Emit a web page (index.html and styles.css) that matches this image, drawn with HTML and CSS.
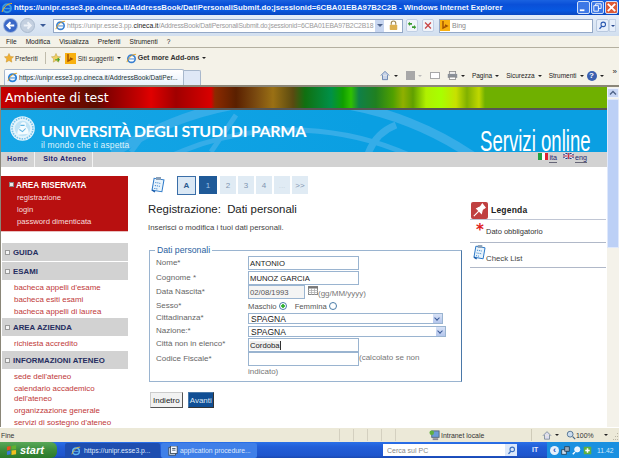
FILE: index.html
```html
<!DOCTYPE html>
<html lang="it">
<head>
<meta charset="utf-8">
<title>Registrazione: Dati personali</title>
<link rel="stylesheet" href="styles.css">
</head>
<body>
<div class="window">
  <header class="titlebar">
    <svg class="ie" viewBox="0 0 12 12"><circle cx="6" cy="6.300" r="4" fill="none" stroke="#3a9be0" stroke-width="2"/><path d="M3 6.500h6.500" stroke="#3a9be0" stroke-width="1.400"/><path d="M1 10C3 4 8 1 11 1.500" fill="none" stroke="#f0b020"/></svg>
    <span class="title-text">https://unipr.esse3.pp.cineca.it/AddressBook/DatiPersonaliSubmit.do;jsessionid=6CBA01EBA97B2C2B - Windows Internet Explorer</span>
    <span class="winbtns">
      <span class="winbtn"><svg viewBox="0 0 12 12"><path d="M2 9h5" stroke="#fff" stroke-width="2"/></svg></span>
      <span class="winbtn"><svg viewBox="0 0 12 12"><path d="M2 4h5v6H2zM4 4V2h6v5H7" fill="none" stroke="#fff"/></svg></span>
      <span class="winbtn close"><svg viewBox="0 0 12 12"><path d="M2 2l8 8M10 2l-8 8" stroke="#fff" stroke-width="2"/></svg></span>
    </span>
  </header>

  <div class="addressbar">
    <svg class="nav-arrow" viewBox="0 0 16 16"><circle cx="8" cy="8" r="7.500" fill="#3a68c8" stroke="#a8bcdc"/><path d="M12 8H5M8 4.500 4.500 8 8 11.500" fill="none" stroke="#fff" stroke-width="2"/></svg>
    <svg class="nav-arrow" viewBox="0 0 16 16"><circle cx="8" cy="8" r="7.500" fill="#c4d0e0" stroke="#a8b8cc"/><path d="M4 8h7M8 4.500 11.500 8 8 11.500" fill="none" stroke="#eef2f8" stroke-width="2"/></svg>
    <span class="nav-drop"></span>
    <div class="urlfield">
      <svg class="ie small" viewBox="0 0 12 12"><circle cx="6" cy="6.300" r="4" fill="none" stroke="#3a80d0" stroke-width="1.800"/><path d="M3 6.500h6" stroke="#3a80d0"/><path d="M1 10C3 4 8 1 11 1.500" fill="none" stroke="#e0a020"/></svg>
      <span class="url"><span class="dim">https://unipr.esse3.pp.</span>cineca.it<span class="dim tail">/AddressBook/DatiPersonaliSubmit.do;jsessionid=6CBA01EBA97B2C2B18</span></span>
      <span class="url-drop"><i></i></span>
      <svg class="lock" viewBox="0 0 12 14"><path d="M3 6V4a3 3 0 0 1 6 0v2" fill="none" stroke="#a08850" stroke-width="1.500"/><rect x="1" y="6" width="10" height="7" rx="1" fill="#dcb050"/></svg>
    </div>
    <span class="toolbtn"><svg viewBox="0 0 12 12"><path d="M1 4l2.500-2.500V3H6v2H3.500v1.500zM11 8 8.500 5.500V7H6v2h2.500v1.500z" fill="#3a9a30"/></svg></span>
    <span class="toolbtn stop"><svg viewBox="0 0 12 12"><path d="M2.500 2.500l7 7M9.500 2.500l-7 7" stroke="#c84848" stroke-width="1.600"/></svg></span>
    <div class="searchfield">
      <span class="bing"><svg viewBox="0 0 10 10"><path d="M3 1v7l4-2-2-1" fill="none" stroke="#a05000" stroke-width="1.400"/></svg></span>
      <span class="searchtext">Bing</span>
    </div>
    <span class="searchbtn"><svg viewBox="0 0 12 12"><circle cx="7" cy="4.500" r="3" fill="none" stroke="#2a58b0" stroke-width="1.400"/><path d="M5 7 2 10.500" stroke="#2a58b0" stroke-width="1.800"/></svg></span>
    <span class="searchdrop"><i></i></span>
  </div>

  <nav class="menubar">
    <span>File</span><span>Modifica</span><span>Visualizza</span><span>Preferiti</span><span>Strumenti</span><span>?</span>
  </nav>

  <div class="favbar">
    <svg class="star" viewBox="0 0 12 12"><path d="M6 .5l1.700 3.600 3.800.5-2.800 2.600.7 3.800L6 9.100l-3.400 1.900.7-3.800L.5 4.600l3.800-.5z" fill="#f0b030" stroke="#c08820" stroke-width=".5"/></svg>
    <span class="fav-label">Preferiti</span>
    <span class="fav-sep"></span>
    <svg class="star" viewBox="0 0 12 12"><path d="M6 .5l1.700 3.600 3.800.5-2.800 2.600.7 3.800L6 9.100l-3.400 1.900.7-3.800L.5 4.600l3.800-.5z" fill="#f0d060" stroke="#b09030" stroke-width=".5"/><path d="M5 8h5M8 6l2 2-2 2" fill="none" stroke="#40a030" stroke-width="1.300"/></svg>
    <span class="bing big"><svg viewBox="0 0 10 10"><path d="M3 1v7l4-2-2-1" fill="none" stroke="#a05000" stroke-width="1.400"/></svg></span>
    <span class="fav-item">Siti suggeriti</span><i class="caret"></i>
    <svg class="ie small addon" viewBox="0 0 12 12"><circle cx="6" cy="6.300" r="4" fill="#fff" stroke="#3a80d0" stroke-width="1.800"/><path d="M3 6.500h6" stroke="#3a80d0"/><path d="M1 10C3 4 8 1 11 1.500" fill="none" stroke="#e0a020"/></svg>
    <span class="fav-item strong">Get more Add-ons</span><i class="caret"></i>
  </div>

  <div class="tabbar">
    <div class="tab">
      <svg class="ie small" viewBox="0 0 12 12"><circle cx="6" cy="6.300" r="4" fill="none" stroke="#2a80d8" stroke-width="2"/><path d="M3 6.500h6" stroke="#2a80d8"/><path d="M1 10C3 4 8 1 11 1.500" fill="none" stroke="#e0a020"/></svg>
      <span>https://unipr.esse3.pp.cineca.it/AddressBook/DatiPer...</span>
    </div>
    <div class="newtab"></div>
    <div class="cmdbar">
      <svg class="cmd home" viewBox="0 0 12 12"><path d="M1 6l5-5 5 5M3 5.500V11h6V5.500" fill="#c8d4e8" stroke="#5a78a8"/></svg><i class="caret wide"></i>
      <span class="cmd-rss"></span><i class="caret light"></i>
      <span class="cmd-mail"></span>
      <svg class="cmd printer" viewBox="0 0 14 12"><rect x="3" y="1" width="8" height="4" fill="#eee" stroke="#888"/><rect x="1" y="4" width="12" height="5" fill="#8a9098"/><rect x="3" y="8" width="8" height="3" fill="#fff" stroke="#888"/></svg><i class="caret"></i>
      <span class="cmd-text">Pagina</span><i class="caret"></i>
      <span class="cmd-text">Sicurezza</span><i class="caret"></i>
      <span class="cmd-text">Strumenti</span><i class="caret"></i>
      <span class="help">?</span><i class="caret"></i>
      <span class="more">»</span>
    </div>
  </div>

  <div class="viewport">
    <div class="page">
      <div class="band">
        <span class="band-text">Ambiente di test</span>
      </div>
      <div class="brand">
        <svg class="watermark" viewBox="0 0 400 42"><g fill="none" stroke="#35ade8"><circle cx="180" cy="312" r="322" stroke-width="9"/><circle cx="180" cy="312" r="292" stroke-width="5"/><circle cx="180" cy="312" r="250" stroke-width="7"/><path d="M257 44C262 30 272 20 285 15" stroke-width="7"/><path d="M100 42 125 5M20 42 40 15" stroke-width="5"/></g></svg>
        <svg class="seal" viewBox="0 0 24 24"><circle cx="12" cy="12" r="11.800" fill="#e4f4fc"/><circle cx="12" cy="12" r="10" fill="none" stroke="#7cc4ea" stroke-width="1.600" stroke-dasharray="1.500 1"/><circle cx="12" cy="12" r="7.500" fill="#bfe3f6"/><path d="M7 18c0-4 1-6 3-7-1-3 1-5 3-5s3 2 2 4c2 1 3 4 3 7z" fill="#f4fbfe"/><path d="M9 13l3 2 3-3M10 9h4" stroke="#5fb4e2" fill="none"/></svg>
        <div class="brand-copy">
          <div class="brand-name">UNIVERSITÀ DEGLI STUDI DI PARMA</div>
          <div class="brand-tag">il mondo che ti aspetta</div>
        </div>
        <div class="brand-services">Servizi online</div>
      </div>
      <div class="topnav">
        <a class="topnav-item">Home</a>
        <a class="topnav-item">Sito Ateneo</a>
        <div class="langs">
          <span class="flag-it"><i></i><i></i><i></i></span><a>ita</a>
          <svg class="flag-uk" viewBox="0 0 12 7"><rect width="12" height="7" fill="#2a3a80"/><path d="M0 0l12 7M12 0 0 7" stroke="#fff" stroke-width="1.200"/><path d="M6 0v7M0 3.500h12" stroke="#fff" stroke-width="2"/><path d="M6 0v7M0 3.500h12" stroke="#c02030"/></svg><a>eng</a>
        </div>
      </div>

      <div class="content">
        <aside class="sidebar">
          <section class="reserved">
            <h3><i class="bullet"></i>AREA RISERVATA</h3>
            <a>registrazione</a>
            <a>login</a>
            <a>password dimenticata</a>
          </section>
          <section class="menu">
            <h4><i class="plus"></i>GUIDA</h4>
            <h4><i class="plus"></i>ESAMI</h4>
            <div class="links">
              <a>bacheca appelli d'esame</a>
              <a>bacheca esiti esami</a>
              <a>bacheca appelli di laurea</a>
            </div>
            <h4><i class="plus"></i>AREA AZIENDA</h4>
            <div class="links single">
              <a>richiesta accredito</a>
            </div>
            <h4><i class="plus"></i>INFORMAZIONI ATENEO</h4>
            <div class="links">
              <a>sede dell'ateneo</a>
              <a>calendario accademico dell'ateneo</a>
              <a>organizzazione generale</a>
              <a>servizi di sostegno d'ateneo</a>
            </div>
          </section>
        </aside>

        <main class="main">
          <div class="steps">
            <svg class="checklist" viewBox="0 0 14 16"><g transform="rotate(10 7 8)"><rect x="2" y="2" width="10" height="12" fill="#e8f3fb" stroke="#2a78c8"/><path d="M4 6h6M4 9h6M4 12h4" stroke="#2a78c8" stroke-dasharray="1 1"/></g><rect x="5" y="0" width="5" height="3" fill="#8aa0b8"/><path d="M1 13l3 2" stroke="#1a5aa8" stroke-width="1.500"/></svg>
            <span class="step current">A</span>
            <span class="step active">1</span>
            <span class="step">2</span>
            <span class="step">3</span>
            <span class="step">4</span>
            <span class="step faint">...</span>
            <span class="step">&gt;&gt;</span>
          </div>
          <h1>Registrazione:&nbsp; Dati personali</h1>
          <p class="intro">Inserisci o modifica i tuoi dati personali.</p>
          <fieldset class="form">
            <legend>Dati personali</legend>
            <div class="row first"><label>Nome*</label><div class="val"><span class="input">ANTONIO</span></div></div>
            <div class="row"><label>Cognome *</label><div class="val"><span class="input">MUNOZ GARCIA</span></div></div>
            <div class="row"><label>Data Nascita*</label><div class="val"><span class="input date">02/08/1993</span>
              <svg class="cal" viewBox="0 0 10 9"><rect x=".5" y=".5" width="9" height="8" fill="#fff" stroke="#888"/><path d="M0 1.500h10" stroke="#777" stroke-width="2"/><path d="M3.500 2v7M6.500 2v7M0 4.500h10M0 6.500h10" stroke="#aaa" stroke-width=".7"/></svg><span class="hint fmt">(gg/MM/yyyy)</span></div></div>
            <div class="row sex"><label>Sesso*</label><div class="val"><span class="opt">Maschio</span><i class="radio on"></i><span class="opt f">Femmina</span><i class="radio"></i></div></div>
            <div class="row sel"><label>Cittadinanza*</label><div class="val"><span class="select w1">SPAGNA<b></b></span></div></div>
            <div class="row sel nat"><label>Nazione:*</label><div class="val"><span class="select w2">SPAGNA<b></b></span></div></div>
            <div class="row city"><label>Città non in elenco*</label><div class="val"><span class="input"><span class="typed">Cordoba</span></span></div></div>
            <div class="row last"><label>Codice Fiscale*</label><div class="val"><span class="input"></span><span class="hint">(calcolato se non indicato)</span></div></div>
          </fieldset>
          <div class="actions">
            <span class="btn">Indietro</span>
            <span class="btn primary">Avanti</span>
          </div>
        </main>

        <aside class="legend">
          <div class="legend-head">
            <span class="pin"><svg viewBox="0 0 18 18"><path d="M3 15l5-5M6 7l5 5 1-4 3-2-3-4-2 3z" fill="#fff" stroke="#fff" stroke-width="1.200"/></svg></span>
            <strong>Legenda</strong>
          </div>
          <div class="legend-row req"><span class="asterisk">*</span><span>Dato obbligatorio</span></div>
          <div class="legend-row chk">
            <svg class="checklist" viewBox="0 0 14 16"><g transform="rotate(10 7 8)"><rect x="2" y="2" width="10" height="12" fill="#e8f3fb" stroke="#2a78c8"/><path d="M4 6h6M4 9h6M4 12h4" stroke="#2a78c8" stroke-dasharray="1 1"/></g><rect x="5" y="0" width="5" height="3" fill="#8aa0b8"/><path d="M1 13l3 2" stroke="#1a5aa8" stroke-width="1.500"/></svg>
            <span>Check List</span>
          </div>
        </aside>
      </div>
    </div>
    <div class="scrollbar">
      <span class="sb-btn"><svg viewBox="0 0 8 6"><path d="M1 4.500l3-3 3 3" fill="none" stroke="#4d6185" stroke-width="1.300"/></svg></span>
      <span class="sb-thumb"></span>
    </div>
  </div>

  <div class="statusbar">
    <span class="status-text">Fine</span>
    <span class="panes"><i></i><i></i><i></i><i></i><i></i></span>
    <svg class="zone" viewBox="0 0 12 12"><rect x="3" y="1" width="8" height="7" fill="#6a9ad8" stroke="#567"/><circle cx="3" cy="3" r="2.500" fill="#60b040"/><rect x="4" y="9" width="6" height="2" fill="#889"/></svg>
    <span class="zone-text">Intranet locale</span>
    <span class="status-sep"></span>
    <svg class="status-ico home" viewBox="0 0 12 12"><path d="M1 7l5-5 5 5M3 6v5h6V6" fill="#dde" stroke="#789"/></svg><i class="caret"></i>
    <svg class="status-ico mag" viewBox="0 0 12 12"><circle cx="5" cy="5" r="3.500" fill="#cde" stroke="#468"/><path d="M8 8l3 3" stroke="#468" stroke-width="1.500"/></svg>
    <span class="zoom-text">100%</span><i class="caret zoom-caret"></i>
    <svg class="grip" viewBox="0 0 6 9"><path d="M4.500 1v1M2.500 4v1M4.500 4v1M.5 7v1M2.500 7v1M4.500 7v1" stroke="#b8b4a4"/></svg>
  </div>

  <footer class="taskbar">
    <div class="start">
      <svg viewBox="0 0 12 12"><path d="M1 2l4-1v4l-4 1z" fill="#e85020"/><path d="M6 1l5-1v4.500L6 5z" fill="#60b030"/><path d="M1 7l4-1v4l-4 1z" fill="#3878d8"/><path d="M6 6l5-.5V10l-5 1z" fill="#f0c020"/></svg>
      <span>start</span>
    </div>
    <div class="task dark">
      <svg viewBox="0 0 12 12"><circle cx="6" cy="6.300" r="4" fill="none" stroke="#60b8f0" stroke-width="1.800"/><path d="M3 6.500h6" stroke="#60b8f0"/><path d="M1 10C3 4 8 1 11 1.500" fill="none" stroke="#f0c030"/></svg>
      <span>https://unipr.esse3.p...</span>
    </div>
    <div class="task">
      <svg viewBox="0 0 12 12"><rect x="1" y="2" width="8" height="9" fill="#dde6f4" stroke="#345"/><rect x="3" y="0" width="8" height="9" fill="#f4f8ff" stroke="#345"/><path d="M5 3h4M5 5h4" stroke="#345"/></svg>
      <span>application procedure...</span>
    </div>
    <div class="deskbar">
      <span class="deskbar-text">Cerca sul PC</span>
      <span class="deskbar-btn"><svg viewBox="0 0 12 12"><circle cx="7" cy="4.500" r="3" fill="none" stroke="#3a70c0" stroke-width="1.400"/><path d="M5 7 2 10.500" stroke="#3a70c0" stroke-width="1.800"/></svg></span>
    </div>
    <span class="lang">IT</span>
    <div class="tray">
      <span class="tray-chev">‹</span>
      <svg class="tray-ico" viewBox="0 0 12 12"><rect x="1" y="5" width="6" height="6" fill="#cde" stroke="#234"/><rect x="5" y="1" width="6" height="6" fill="#9ab" stroke="#234"/></svg>
      <svg class="tray-ico" viewBox="0 0 12 12"><circle cx="7" cy="4.500" r="3.500" fill="#e8f4ff" stroke="#fff"/><path d="M4 8l-3 3" stroke="#fff" stroke-width="2"/></svg>
      <svg class="tray-ico" viewBox="0 0 12 12"><rect x="1" y="1" width="10" height="10" fill="#60b040"/><path d="M6 3v6M3 6h6" stroke="#fff" stroke-width="2"/></svg>
      <span class="clock">11.42</span>
    </div>
  </footer>
</div>
</body>
</html>
```

FILE: styles.css
```css
* { box-sizing: border-box; }
html, body { margin: 0; padding: 0; }
body { width: 619px; height: 458px; overflow: hidden; font-family: "Liberation Sans", Arial, sans-serif; background: #ece9d8; }
svg { display: block; flex: none; }
i { display: block; font-style: normal; }
a { text-decoration: none; color: inherit; }

.window { width: 619px; height: 458px; display: flex; flex-direction: column; }

/* title bar */
.titlebar { height: 15px; flex: none; display: flex; align-items: center; padding-left: 1px; background: linear-gradient(#1a62e0, #0a50d8 30%, #0858e0 70%, #0a48c0); color: #fff; }
.titlebar .ie { width: 12px; height: 12px; }
.title-text { margin-left: 1px; font: bold 7.800px/14px "Liberation Sans", sans-serif; white-space: nowrap; flex: 1; overflow: hidden; opacity: .95; }
.winbtns { display: flex; gap: 1px; margin-right: 1px; }
.winbtn { width: 13px; height: 13px; border: 1px solid #cfe0fa; border-radius: 2px; background: #3d78e6; display: flex; align-items: center; justify-content: center; }
.winbtn svg { width: 11px; height: 11px; }
.winbtn.close { background: #dc5a38; }

/* address row */
.addressbar { height: 21px; flex: none; display: flex; align-items: center; padding-left: 3px; background: linear-gradient(#e4edf8, #d2dfef); }
.nav-arrow { width: 15px; height: 15px; margin-right: 2px; }
.nav-drop { width: 0; height: 0; margin: 0 7px 0 3px; border: 3px solid transparent; border-top: 3px solid #3a5a98; border-bottom: 0; }
.urlfield { width: 350px; height: 14px; display: flex; align-items: center; background: #fff; border: 1px solid #94a8c6; }
.ie.small { width: 11px; height: 11px; }
.urlfield .ie { margin-left: 1px; }
.url { margin-left: 1px; flex: 1; width: 0; overflow: hidden; white-space: nowrap; font-size: 6.800px; line-height: 11px; color: #222; }
.url .dim { color: #9a9a9a; }
.url .tail { letter-spacing: -.18px; }
.url-drop { width: 9px; height: 12px; background: #c8d6f0; display: flex; align-items: center; justify-content: center; }
.url-drop i { border: 3px solid transparent; border-top-color: #50648c; border-bottom: 0; }
.lock { width: 9px; height: 11px; margin: 0 4px 0 5px; }
.toolbtn { width: 12px; height: 13px; margin-left: 3px; background: #f0f4fa; border: 1px solid #c0cfe4; border-radius: 2px; }
.toolbtn.stop { margin-left: 4px; }
.toolbtn svg { width: 10px; height: 11px; }
.searchfield { width: 154px; height: 14px; margin-left: 5px; display: flex; align-items: center; background: #fff; border: 1px solid #94a8c6; }
.bing { width: 10px; height: 11px; background: #f8b010; }
.bing svg { width: 10px; height: 10px; }
.bing.big { width: 11px; height: 11px; margin: 0 2px 0 4px; }
.searchtext { margin-left: 2px; font-size: 7px; color: #8a8a8a; }
.searchbtn { width: 13px; height: 13px; margin-left: 3px; background: #e6eefa; border: 1px solid #b8c8de; border-radius: 2px; display: flex; align-items: center; justify-content: center; }
.searchbtn svg { width: 9px; height: 9px; }
.searchdrop { width: 7px; height: 13px; background: #e6eefa; border: 1px solid #c4d2e6; display: flex; align-items: center; justify-content: center; }
.searchdrop i { border: 2px solid transparent; border-top-color: #2a4a90; border-bottom: 0; }

/* menu */
.menubar { height: 12px; flex: none; display: flex; align-items: center; padding-left: 6px; gap: 9px; font-size: 6.600px; color: #222; background: #f4f2e8; border-bottom: 1px solid #b4b0a0; }

/* favorites */
.favbar { height: 18px; flex: none; display: flex; align-items: center; padding: 2px 0 0 4px; background: #f4f2e8; font-size: 6.600px; color: #333; }
.star { width: 10px; height: 10px; }
.fav-label { margin-left: 1px; }
.fav-sep { width: 1px; height: 12px; margin: 0 5px 0 7px; background: #c0bcac; }
.fav-item.strong { font-weight: bold; font-size: 7.100px; }
.caret { width: 0; height: 0; margin: 0 3px; border: 2px solid transparent; border-top: 2px solid #222; border-bottom: 0; flex: none; }
.caret.light { border-top-color: #bbb; }
.caret.wide { margin: 0 4px; }
.addon { margin: 0 1px 0 2px; }

/* tabs */
.tabbar { height: 19px; flex: none; display: flex; align-items: flex-end; padding-left: 4px; background: #f4f2e8; }
.tab { width: 180px; height: 16px; display: flex; align-items: center; padding-left: 2px; gap: 1px; font-size: 6.600px; color: #233; white-space: nowrap; overflow: hidden; background: linear-gradient(#fff, #e8f0fa); border: 1px solid #a8b8cc; border-bottom: 0; border-radius: 2px 2px 0 0; }
.newtab { width: 17px; height: 15px; background: #dfe8f6; border: 1px solid #a8b8cc; border-left: 0; border-bottom: 0; border-radius: 0 2px 0 0; }
.cmdbar { flex: 1; height: 19px; padding-right: 2px; display: flex; align-items: center; justify-content: flex-end; font-size: 6.500px; color: #222; }
.cmd { height: 11px; width: 10px; }
.cmd.printer { width: 11px; margin-left: 7px; }
.cmd-rss { width: 9px; height: 9px; margin-left: 4px; background: #a8a8a8; }
.cmd-mail { width: 10px; height: 7px; margin-left: 5px; border: 1px solid #a8a8a8; background: #fff; }
.cmd-text { margin-left: 4px; }
.help { width: 10px; height: 10px; margin-left: 0; border-radius: 50%; background: #3a60b0; color: #fff; text-align: center; font: bold 8px/10px "Liberation Sans", sans-serif; }
.more { font-size: 8px; margin: -8px 0 0 6px; }

/* viewport */
.viewport { height: 342px; flex: none; display: flex; background: #fff; border-left: 1px solid #8a8678; border-top: 2px solid #8a8678; }
.page { width: 606px; flex: none; display: flex; flex-direction: column; overflow: hidden; }
.scrollbar { flex: 1; display: flex; flex-direction: column; background: #f4f2ea; }
.sb-btn { height: 10px; margin-top: 1px; background: #c8d6f4; border: 1px solid #eef2fb; display: flex; align-items: center; justify-content: center; }
.sb-btn svg { width: 8px; height: 6px; }
.sb-thumb { height: 149px; margin-top: 1px; background: #bcd0f6; border: 1px solid #dfe8fb; border-radius: 1px; }

.band { height: 21px; flex: none; padding-left: 4px; color: #fff; font: 12.500px/21px "DejaVu Sans", sans-serif; background: linear-gradient(90deg, #c80000 0, #b00000 20px, #5a0c00 95px, #800000 105px, #c80000 140px, #e00000 150px, #a00000 175px, #c00000 195px, #d80000 210px, #8c2a00 214px, #5a2000 235px, #7a4a10 255px, #9a7014 272px, #5a4a10 292px, #107010 304px, #009048 330px, #10a000 342px, #30c000 350px, #108048 358px, #208020 375px, #50a000 392px, #90b000 402px, #60a000 412px, #b0f000 425px, #a8ff00 440px, #c8e000 455px, #80b000 466px, #c0d800 478px, #6fb000 484px, #6fb000 100%); }
.brand { height: 44px; flex: none; display: flex; align-items: flex-start; position: relative; overflow: hidden; background: linear-gradient(90deg, #16a6e6, #0a9fe2 60%); border-top: 2px solid #555; }
.watermark { position: absolute; left: 110px; top: 0; width: 400px; height: 42px; }
.seal { position: relative; width: 25px; height: 25px; margin: 6px 0 0 9px; }
.brand-copy { position: relative; margin-left: 6px; padding-top: 12px; color: #fff; }
.brand-name { font: 700 16px/17px Lato, sans-serif; letter-spacing: -.3px; white-space: nowrap; }
.brand-tag { margin-top: 1px; font-size: 8.500px; line-height: 10px; color: #dff3fc; letter-spacing: .15px; }
.brand-services { position: relative; width: 112px; margin: 20px 15px 0 auto; transform: scaleY(1.610); transform-origin: left top; color: #fff; font: 18.600px/14px "Liberation Sans", sans-serif; white-space: nowrap; }

.topnav { height: 15px; flex: none; display: flex; align-items: stretch; background: #d2d2d2; color: #25256e; font-size: 7.200px; font-weight: bold; }
.topnav-item { padding: 0 6px; line-height: 13px; border-right: 1px solid #f2f2f2; letter-spacing: .3px; }
.topnav-item + .topnav-item { padding: 0 6px 0 8px; }
.langs { margin-left: auto; padding: 1px 20px 0 0; display: flex; align-items: flex-start; font-weight: normal; line-height: 9px; }
.flag-it { width: 10px; height: 7px; display: flex; margin-right: 1px; }
.flag-it i { flex: 1; background: #fff; }
.flag-it i:first-child { background: #20a040; }
.flag-it i:last-child { background: #e02030; }
.langs a { border-bottom: 1px solid #667; }
.flag-uk { width: 11px; height: 6px; margin: 0 1px 0 6px; }

.content { flex: 1; min-height: 0; display: flex; }

/* sidebar */
.sidebar { width: 127px; flex: none; padding-top: 9px; overflow: hidden; }
.reserved { height: 56px; padding: 4px 0 0 5px; background: #b81010; border-bottom: 1px solid #e8c0c0; color: #f6dede; font-size: 7.700px; line-height: 12px; }
.reserved h3 { margin: 0 0 1px; display: flex; align-items: center; color: #fff; font-size: 8.200px; line-height: 11px; }
.bullet { width: 5px; height: 5px; margin: -3px 2px 0 3px; background: #f0e8e8; border: 1px solid #888; }
.reserved a { display: block; padding-left: 11px; }
.menu { margin-top: 11px; margin-left: 1px; }
.menu h4 { margin: 0 0 1px; height: 18px; display: flex; align-items: center; background: #d2d2d2; color: #252d60; font-size: 7.800px; letter-spacing: .05px; }
.plus { width: 5px; height: 5px; margin: 0 3px; background: #f4f4f4; border: 1px solid #999; }
.links { padding: 1px 0 0 12px; color: #c03838; font-size: 7.900px; line-height: 10px; }
.links.single { padding-bottom: 1px; }
.links a { display: block; padding: 1px 10px 1px 0; }

/* main */
.main { width: 314px; flex: none; margin-left: 21px; padding-top: 8px; }
.steps { height: 20px; display: flex; align-items: center; gap: 2px; padding-left: 2px; }
.steps .checklist { margin-right: 10px; }
.checklist { width: 14px; height: 16px; }
.step { width: 16px; height: 18px; display: flex; align-items: center; justify-content: center; background: #e0ebf4; color: #7f94b0; font-size: 8px; }
.step.current { width: 19px; height: 19px; color: #2a5a90; border: 1px solid #3a6ea8; font-weight: bold; background: #dbe8f4; }
.step.active { width: 18px; height: 18px; margin: 0 1px; background: #1f5a98; color: #9ec4e6; }
.step.faint { color: #c8d4e0; }
h1 { margin: 7px 0 0 -1px; font-size: 11.400px; line-height: 14px; font-weight: normal; color: #222; white-space: nowrap; }
.intro { margin: 7px 0 0 -1px; font-size: 7.800px; line-height: 10px; color: #444; }

.form { width: 313px; height: 136px; margin: 13px 0 0; padding: 1px 3px 0 6px; border: 1px solid #9ab4d0; border-right-color: #4a78a8; }
.form legend { margin-left: -1px; padding: 0 2px; font-size: 8.700px; line-height: 9px; color: #2a5fa0; }
.row { display: grid; grid-template-columns: 92px 1fr; height: 14px; font-size: 8px; color: #666; }
.row.first { height: 15px; }
.row label { line-height: 11px; margin-top: 1px; }
.row.sex label { margin-top: -1px; }
.row.sel label { margin-top: -1px; }
.row.city label { margin-top: 0; }
.val { display: flex; align-items: flex-start; }
.input { width: 111px; height: 14px; padding-left: 1px; border: 1px solid #9ab4d0; background: #fff; color: #222; font-size: 7.700px; line-height: 13px; }
.input.date { width: 57px; color: #555; background: #f4f4f4; }
.typed { background: #f0f0f0; border-right: 1px solid #333; }
.cal { width: 10px; height: 9px; margin-left: 3px; margin-top: 1px; }
.hint { font-size: 8px; line-height: 12px; color: #777; }
.fmt { margin-top: 3px; }
.row.sex { padding-top: 2px; }
.opt { line-height: 11px; color: #555; font-size: 7.700px; }
.opt.f { margin-left: 8px; }
.radio { width: 8px; height: 8px; margin: 1px 0 0 2px; border: 1px solid #4a7ca8; border-radius: 50%; background: #fff; }
.radio.on { background: radial-gradient(circle, #30b030 0 1.500px, #fff 2px); }
.row.sel { height: 13px; }
.row.sel.nat { height: 12px; }
.select { width: 195px; height: 11px; padding-left: 2px; display: flex; align-items: center; justify-content: space-between; border: 1px solid #9ab4d0; color: #222; font-size: 8.500px; background: #fff; }
.select.w2 { width: 198px; }
.select b { width: 9px; height: 9px; background: #c4d4f0 linear-gradient(#d8e2f6, #b4c6ec); position: relative; }
.select b::after { content: ""; position: absolute; left: 2px; top: 2px; width: 3px; height: 3px; border: solid #3a5a98; border-width: 0 1px 1px 0; transform: rotate(45deg); }
.row.last { height: auto; }
.last .val { display: block; max-width: 185px; }
.last .input { display: inline-block; vertical-align: top; }
.last .hint { display: inline; line-height: 12px; }
.actions { display: flex; gap: 5px; margin: 10px 0 0 1px; }
.btn { height: 16px; padding: 0 2px; border: 1px solid #666; border-color: #ccc #555 #555 #ccc; background: #f2f2f2; color: #222; font-size: 8px; line-height: 15px; }
.btn.primary { padding: 0 1px; background: #104e94; color: #dce8f4; border-color: #4a78a8 #333 #333 #4a78a8; }

/* legend */
.legend { width: 136px; flex: none; margin-left: 7px; padding-top: 34px; }
.legend-head { height: 19px; display: flex; align-items: center; gap: 3px; border-bottom: 1px solid #c0c6d4; }
.legend-head strong { font: bold 8.500px "Liberation Sans", sans-serif; color: #222; letter-spacing: .2px; }
.pin { width: 17px; height: 17px; margin-left: 1px; border-radius: 2px; background: #c04040; }
.pin svg { width: 17px; height: 17px; }
.legend-row { display: flex; font-size: 7.500px; color: #444; border-bottom: 1px solid #b0b8c8; }
.req { height: 23px; padding: 3px 0 0 6px; line-height: 18px; color: #333; }
.asterisk { width: 10px; color: #e02020; font: bold 15px/14px "DejaVu Sans", sans-serif; }
.chk { height: 25px; padding: 3px 0 2px; align-items: flex-end; font-size: 7.800px; line-height: 13px; }
.chk .checklist { margin: -1px 0 0 3px; align-self: flex-start; width: 13px; height: 15px; }

/* status */
.statusbar { height: 15px; flex: none; display: flex; align-items: center; padding: 0 0 0 1px; background: #ece9d8; border-top: 1px solid #fff; font-size: 6.900px; color: #333; }
.status-text { width: 28px; }
.panes { display: flex; width: 88px; margin-left: 310px; }
.panes i { width: 14px; height: 12px; border-left: 1px solid #d4d0c0; }
.zone { width: 11px; height: 11px; margin-left: 2px; }
.zone-text { width: 90px; margin-left: 1px; }
.status-sep { width: 1px; height: 12px; background: #cfcbb9; }
.status-ico { width: 10px; height: 10px; }
.status-ico.home { margin-left: 10px; }
.status-ico.mag { margin-left: 4px; }
.zoom-caret { margin-left: 10px; }
.grip { width: 6px; height: 9px; margin: 3px 0 0 auto; }

/* taskbar */
.taskbar { height: 16px; flex: none; display: flex; align-items: stretch; background: linear-gradient(#2a70e8, #225ed8 30%, #1e55cc 85%, #1a48b0); color: #dfe9fb; font-size: 6.800px; }
.start { width: 57px; display: flex; align-items: center; gap: 3px; padding-left: 6px; background: linear-gradient(#58a858, #3c8c3c 50%, #2a7a2a); border-radius: 0 6px 6px 0; color: #fff; font: italic bold 11px "Liberation Sans", sans-serif; }
.start svg { width: 11px; height: 11px; }
.task { width: 96px; display: flex; align-items: center; gap: 2px; padding-left: 7px; background: #3f7fe8; border-radius: 2px; margin-top: 1px; white-space: nowrap; overflow: hidden; }
.task svg { width: 10px; height: 10px; }
.task.dark { width: 95px; margin: 1px 1px 0 8px; gap: 3px; padding-left: 6px; background: #1e4eb0; }
.deskbar { width: 134px; height: 12px; margin: 2px 0 0 126px; display: flex; align-items: center; justify-content: space-between; padding-left: 4px; background: #fff; color: #888; font-size: 7px; }
.deskbar-btn { width: 12px; height: 12px; background: #dce8fa; display: flex; align-items: center; justify-content: center; }
.deskbar-btn svg { width: 9px; height: 9px; }
.lang { margin-left: 15px; line-height: 16px; font-weight: bold; color: #e8f0ff; }
.tray { margin-left: auto; width: 72px; display: flex; align-items: center; gap: 2px; padding-left: 3px; background: #1a90e0; }
.tray-chev { width: 9px; height: 9px; border-radius: 50%; background: #e8f0fb; color: #1e50b8; font: bold 9px/8px "Liberation Sans", sans-serif; text-align: center; }
.tray-ico { width: 9px; height: 9px; }
.clock { margin-left: 3px; color: #cfe8fa; }
```
